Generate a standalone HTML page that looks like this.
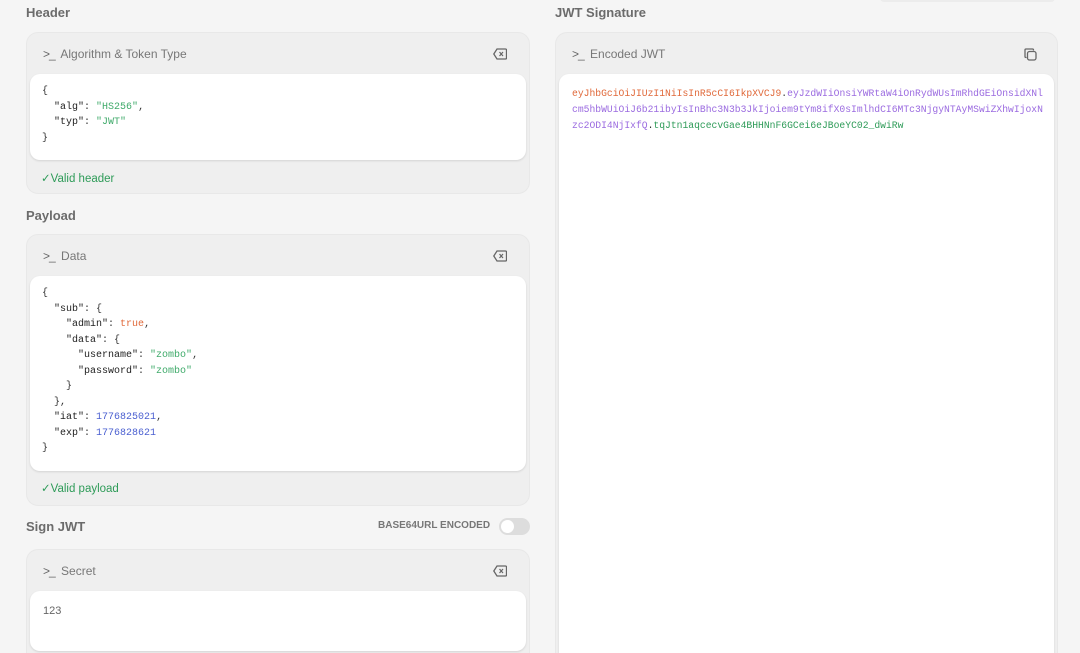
<!DOCTYPE html>
<html style="width:1080px;height:653px;overflow:hidden"><head><meta charset="utf-8"><style>
*{box-sizing:border-box;margin:0;padding:0}
body{width:1080px;height:653px;overflow:hidden;background:#f5f5f5;font-family:"Liberation Sans",sans-serif;position:relative}
.h{position:absolute;font-size:13px;font-weight:bold;color:#6b6b6b}
.card{position:absolute;background:#efefef;border:1px solid #e8e8e8;border-radius:12px;overflow:hidden}
.bar{position:absolute;left:0;right:0;top:0;height:41px;font-size:12px;color:#777;padding:14px 0 0 16px}
.bar b{font-weight:normal;letter-spacing:-1px;margin-right:3px;color:#666}
.ico{position:absolute;right:22px;top:15px}
.in{position:absolute;left:3px;right:3px;background:#fff;border-radius:10px;box-shadow:0 1px 2px rgba(0,0,0,.12)}
.code{font-family:"Liberation Mono",monospace;font-size:10px;line-height:15.5px;color:#333;white-space:pre;padding:10px 0 0 12px}
.k{color:#222}.s{color:#3faa6a}.o{color:#e0693a}.n{color:#4a5fd0}.p{color:#9b6be0}
.ok{position:absolute;left:14px;font-size:11.5px;color:#2e9b58}
</style></head><body>
<div style="position:absolute;left:880px;top:-6px;width:175px;height:8px;background:#ececec;border-radius:6px"></div>
<div class="h" style="left:26px;top:5px">Header</div>
<div class="h" style="left:555px;top:5px">JWT Signature</div>

<div class="card" style="left:26px;top:32px;width:504px;height:162px">
<div class="bar"><b>&gt;_</b> Algorithm &amp; Token Type</div>
<svg class="ico" width="14" height="12" viewBox="0 0 14 12"><path d="M4 1h8.5a1 1 0 0 1 1 1v8a1 1 0 0 1-1 1H4L0.8 6z" fill="none" stroke="#666" stroke-width="1.3"/><path d="M6.5 4l3.5 4M10 4l-3.5 4" stroke="#666" stroke-width="1.2"/></svg>
<div class="in" style="top:41px;height:86px"><div class="code">{
  <span class="k">"alg"</span>: <span class="s">"HS256"</span>,
  <span class="k">"typ"</span>: <span class="s">"JWT"</span>
}</div></div>
<div class="ok" style="top:138px">✓Valid header</div>
</div>

<div class="h" style="left:26px;top:208px">Payload</div>
<div class="card" style="left:26px;top:234px;width:504px;height:272px">
<div class="bar"><b>&gt;_</b> Data</div>
<svg class="ico" width="14" height="12" viewBox="0 0 14 12"><path d="M4 1h8.5a1 1 0 0 1 1 1v8a1 1 0 0 1-1 1H4L0.8 6z" fill="none" stroke="#666" stroke-width="1.3"/><path d="M6.5 4l3.5 4M10 4l-3.5 4" stroke="#666" stroke-width="1.2"/></svg>
<div class="in" style="top:41px;height:195px"><div class="code">{
  <span class="k">"sub"</span>: {
    <span class="k">"admin"</span>: <span class="o">true</span>,
    <span class="k">"data"</span>: {
      <span class="k">"username"</span>: <span class="s">"zombo"</span>,
      <span class="k">"password"</span>: <span class="s">"zombo"</span>
    }
  },
  <span class="k">"iat"</span>: <span class="n">1776825021</span>,
  <span class="k">"exp"</span>: <span class="n">1776828621</span>
}</div></div>
<div class="ok" style="top:246px">✓Valid payload</div>
</div>

<div class="h" style="left:26px;top:519px">Sign JWT</div>
<div style="position:absolute;left:378px;top:520px;font-size:10px;font-weight:bold;color:#777">BASE64URL ENCODED</div>
<div style="position:absolute;left:499px;top:518px;width:31px;height:17px;border-radius:9px;background:#ddd"><div style="position:absolute;left:2px;top:2px;width:13px;height:13px;border-radius:50%;background:#fff"></div></div>

<div class="card" style="left:26px;top:549px;width:504px;height:104px;border-bottom:none;border-radius:12px 12px 0 0">
<div class="bar"><b>&gt;_</b> Secret</div>
<svg class="ico" width="14" height="12" viewBox="0 0 14 12"><path d="M4 1h8.5a1 1 0 0 1 1 1v8a1 1 0 0 1-1 1H4L0.8 6z" fill="none" stroke="#666" stroke-width="1.3"/><path d="M6.5 4l3.5 4M10 4l-3.5 4" stroke="#666" stroke-width="1.2"/></svg>
<div class="in" style="top:41px;height:60px"><div style="padding:14px 0 0 13px;font-size:11px;color:#666">123</div></div>
</div>

<div class="card" style="left:555px;top:32px;width:503px;height:621px;border-bottom:none;border-radius:12px 12px 0 0">
<div class="bar"><b>&gt;_</b> Encoded JWT</div>
<svg class="ico" width="13" height="13" viewBox="0 0 13 13" style="right:20px"><rect x="3.5" y="3.5" width="8.5" height="8.5" rx="2" fill="none" stroke="#666" stroke-width="1.3"/><path d="M2.5 9.5H2a1 1 0 0 1-1-1V2a1 1 0 0 1 1-1h6.5a1 1 0 0 1 1 1v.5" fill="none" stroke="#666" stroke-width="1.3"/></svg>
<div class="in" style="top:41px;height:600px"><div class="code" style="padding:12px 0 0 13px;font-size:9.7px;line-height:16px"><span class="o">eyJhbGciOiJIUzI1NiIsInR5cCI6IkpXVCJ9</span>.<span class="p">eyJzdWIiOnsiYWRtaW4iOnRydWUsImRhdGEiOnsidXNl</span>
<span class="p">cm5hbWUiOiJ6b21ibyIsInBhc3N3b3JkIjoiem9tYm8ifX0sImlhdCI6MTc3NjgyNTAyMSwiZXhwIjoxN</span>
<span class="p">zc2ODI4NjIxfQ</span>.<span class="s" style="color:#2e9b58">tqJtn1aqcecvGae4BHHNnF6GCei6eJBoeYC02_dwiRw</span></div></div>
</div>
</body></html>
